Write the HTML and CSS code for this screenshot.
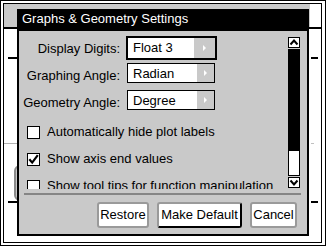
FILE: index.html
```html
<!DOCTYPE html>
<html>
<head>
<meta charset="utf-8">
<link rel="stylesheet" href="styles.css">
</head>
<body>
<div class="frame">
  <div class="screen">
    <div class="page">
      <div class="appbar"></div>
      <div class="main">
        <div class="dash d1"></div>
        <div class="faint"></div>
        <div class="pill"></div>
        <div class="dash d2"></div>
      </div>
    </div>
    <div class="gutter">
      <div class="gline"></div>
      <div class="gdash g1"></div>
      <div class="gfaint"></div>
      <div class="gdash g2"></div>
    </div>

    <div class="dialog">
      <div class="title">Graphs &amp; Geometry Settings</div>
      <div class="content">
        <div class="form">
          <div class="row">
            <div class="label">Display Digits:</div>
            <div class="select focused"><span class="val">Float 3</span><span class="arrow"></span></div>
          </div>
          <div class="row">
            <div class="label">Graphing Angle:</div>
            <div class="select"><span class="val">Radian</span><span class="arrow"></span></div>
          </div>
          <div class="row">
            <div class="label">Geometry Angle:</div>
            <div class="select"><span class="val">Degree</span><span class="arrow"></span></div>
          </div>
          <div class="checks">
            <div class="check"><span class="box"></span><span>Automatically hide plot labels</span></div>
            <div class="check"><span class="box"><svg width="11" height="11" viewBox="0 0 11 11"><path d="M1.3 5.2 L4.2 8.6 L9.8 1.2" fill="none" stroke="#000" stroke-width="2.2"/></svg></span><span>Show axis end values</span></div>
            <div class="check"><span class="box"></span><span>Show tool tips for function manipulation</span></div>
          </div>
        </div>
        <div class="scrollbar">
          <div class="sbtn"><svg width="10" height="9" viewBox="0 0 10 9"><path d="M1.5 6.5 L5 2.5 L8.5 6.5" fill="none" stroke="#000" stroke-width="2"/></svg></div>
          <div class="track"><div class="thumb"></div></div>
          <div class="sbtn"><svg width="10" height="9" viewBox="0 0 10 9"><path d="M1.5 2.5 L5 6.5 L8.5 2.5" fill="none" stroke="#000" stroke-width="2"/></svg></div>
        </div>
      </div>
      <div class="sep"></div>
      <div class="buttons">
        <div class="btn b-restore">Restore</div>
        <div class="btn b-default">Make Default</div>
        <div class="btn b-cancel">Cancel</div>
      </div>
    </div>
  </div>
</div>
</body>
</html>
```
FILE: styles.css
```css
html, body {
  margin: 0;
  padding: 0;
  background: #fff;
}
body {
  width: 326px;
  height: 246px;
  overflow: hidden;
  font-family: "Liberation Sans", Arial, sans-serif;
  font-size: 13px;
  color: #000;
}
.frame {
  box-sizing: border-box;
  width: 326px;
  height: 246px;
  border: 1px solid #000;
  padding: 2px 3px 2px 2px;
  background: #fff;
}
.screen {
  box-sizing: border-box;
  position: relative;
  height: 240px;
  border: 1px solid #000;
  background: #fff;
  display: flex;
}
.page {
  flex: 1;
  display: flex;
  flex-direction: column;
}
.appbar {
  height: 23px;
  background: #c9c9c9;
  border-bottom: 2px solid #000;
  flex: none;
}
.main {
  flex: 1;
  display: flex;
  flex-direction: column;
}
.dash {
  height: 2px;
  width: 20px;
  background: #000;
  margin-left: 4px;
}
.d1 { margin-top: 28px; }
.faint {
  height: 1px;
  width: 30px;
  background: #b0b0b0;
  margin-top: 84px;
}
.pill {
  box-sizing: border-box;
  width: 40px;
  height: 36px;
  margin-top: 21px;
  margin-left: 10px;
  border: 2px solid #8a8a8a;
  border-radius: 6px;
  background: #c9c9c9;
}
.d2 { margin-top: 0; }
.gutter {
  width: 11px;
  flex: none;
  display: flex;
  flex-direction: column;
}
.gline {
  height: 2px;
  margin-top: 23px;
  background: #000;
}
.gdash {
  height: 2px;
  width: 7px;
  margin-left: 1px;
  background: #000;
}
.g1 { margin-top: 28px; }
.gfaint {
  height: 1px;
  width: 3px;
  margin-left: 1px;
  margin-top: 84px;
  background: #c0c0c0;
}
.g2 { margin-top: 57px; }

/* dialog */
.dialog {
  position: absolute;
  left: 13px;
  top: 5px;
  box-sizing: border-box;
  width: 292px;
  height: 227px;
  border: 2px solid #000;
  background: #c9c9c9;
  display: flex;
  flex-direction: column;
}
.title {
  height: 20px;
  flex: none;
  background: #000;
  color: #fff;
  line-height: 15px;
  padding-left: 3px;
  box-sizing: border-box;
  white-space: nowrap;
}
.content {
  height: 158px;
  flex: none;
  overflow: hidden;
  display: flex;
}
.form {
  flex: 1;
  padding-top: 5px;
  display: flex;
  flex-direction: column;
}
.row {
  height: 27px;
  display: flex;
  align-items: flex-start;
  flex: none;
}
.label {
  width: 101px;
  text-align: right;
  line-height: 20px;
  height: 20px;
  padding-top: 3px;
  white-space: nowrap;
}
.select {
  box-sizing: border-box;
  margin-left: 7px;
  width: 88px;
  height: 20px;
  border: 1px solid #000;
  background: #fff;
  display: flex;
}
.select.focused {
  margin-left: 6px;
  width: 91px;
  height: 24px;
  border: 2px solid #000;
}
.val {
  flex: 1;
  padding-left: 5px;
  line-height: 20px;
  white-space: nowrap;
}
.arrow {
  width: 17px;
  background: #c9c9c9;
  display: flex;
  align-items: center;
  justify-content: center;
}
.focused .arrow { width: 21px; }
.arrow::after {
  content: "";
  width: 0;
  height: 0;
  border-top: 3px solid transparent;
  border-bottom: 3px solid transparent;
  border-left: 3px solid #fff;
}
.checks {
  margin-top: 8px;
  padding-left: 8px;
  display: flex;
  flex-direction: column;
  gap: 13px;
}
.check {
  display: flex;
  align-items: center;
  height: 14px;
  line-height: 14px;
  white-space: nowrap;
  flex: none;
}
.box {
  box-sizing: border-box;
  width: 13px;
  height: 13px;
  border: 1px solid #000;
  background: #fff;
  margin-right: 7px;
  display: flex;
  align-items: center;
  justify-content: center;
  flex: none;
}
.scrollbar {
  width: 12px;
  height: 151px;
  margin-top: 6px;
  margin-right: 7px;
  display: flex;
  flex-direction: column;
  gap: 1px;
}
.sbtn {
  box-sizing: border-box;
  height: 11px;
  border: 1px solid #000;
  background: #fff;
  display: flex;
  align-items: center;
  justify-content: center;
}
.track {
  flex: 1;
  box-sizing: border-box;
  border: 1px solid #000;
  background: #fff;
}
.thumb {
  height: 101px;
  background: #000;
}
.sep {
  flex: none;
  height: 2px;
  margin: 4px 6px 0 5px;
  background: #858585;
}
.buttons {
  flex: none;
  margin-top: 7px;
  height: 26px;
  padding-right: 10px;
  display: flex;
  justify-content: flex-end;
  gap: 8px;
}
.btn {
  box-sizing: border-box;
  height: 26px;
  border: 2px solid #9a9a9a;
  border-radius: 3px;
  background: #fff;
  line-height: 22px;
  text-align: center;
  white-space: nowrap;
}
.b-restore { width: 52px; }
.b-default {
  width: 85px;
  border-color: #9a9a9a #000 #000 #9a9a9a;
}
.b-cancel { width: 47px; }
```
